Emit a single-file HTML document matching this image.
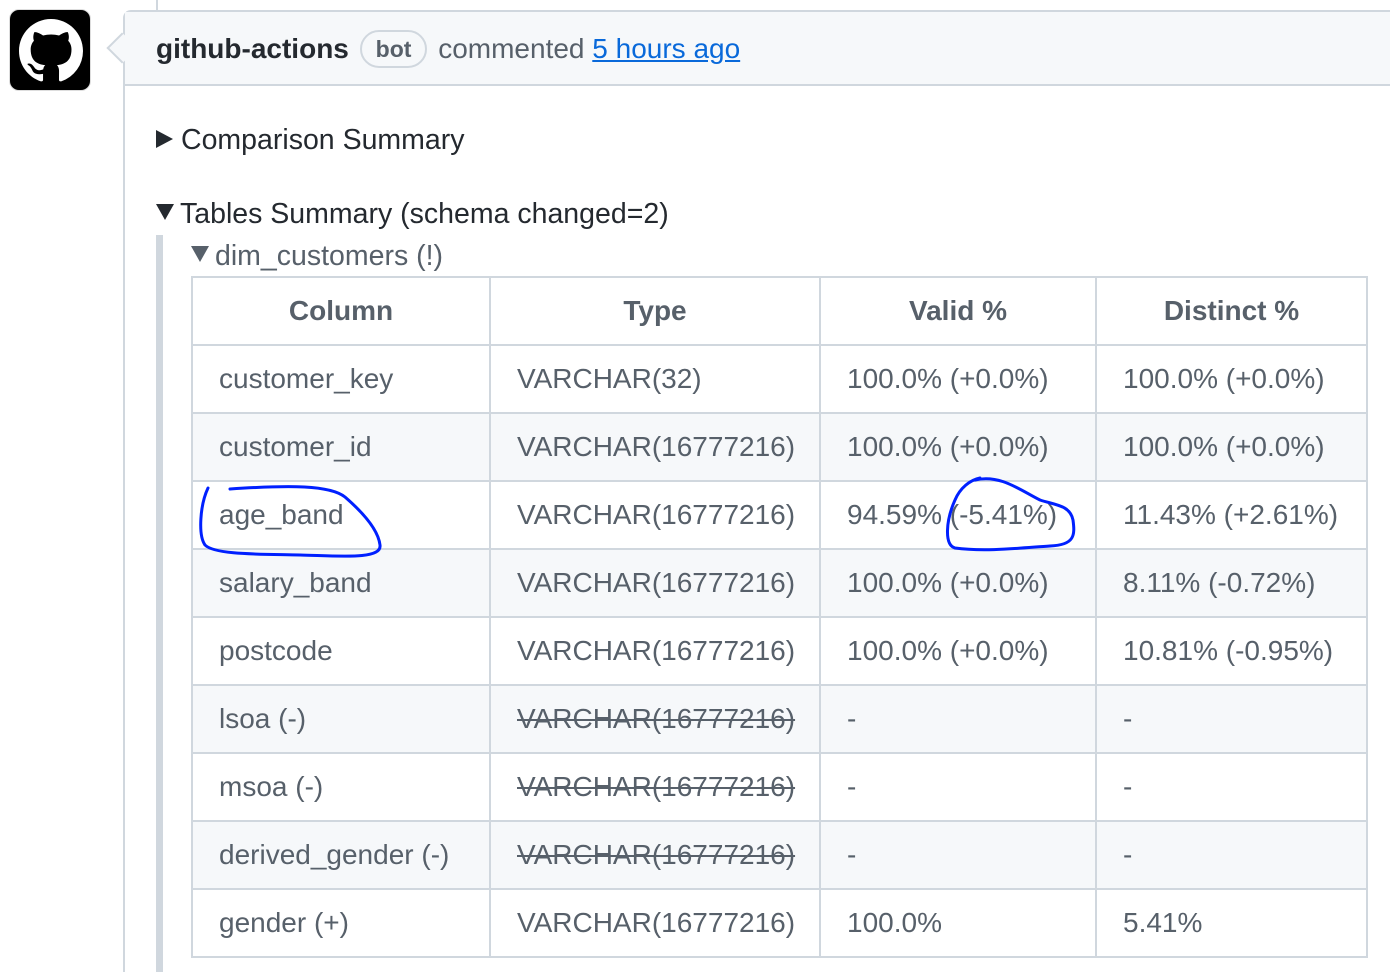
<!DOCTYPE html>
<html style="overflow:hidden;height:972px"><head><meta charset="utf-8"><style>
body{margin:0;width:1390px;height:972px;background:#fff;font-family:"Liberation Sans",Arial,sans-serif;position:relative;overflow:hidden;color:#24292f}
.abs{position:absolute}
table{position:absolute;left:191px;top:276px;border-collapse:collapse;font-size:28px;color:#57606a}
td,th{border:2px solid #d0d7de;height:66px;padding:0 0 0 26px;text-align:left;white-space:nowrap}
th{text-align:center;padding:0;font-weight:bold;color:#57606a}
tr.g td{background:#f6f8fa}
s{text-decoration-thickness:2px}
.tr{display:inline-block;width:0;height:0;border-top:9px solid transparent;border-bottom:9px solid transparent;border-left:17px solid #24292f;margin-right:8px;vertical-align:1px}
.td{display:inline-block;width:0;height:0;border-left:9.5px solid transparent;border-right:9.5px solid transparent;border-top:16px solid #24292f;margin-right:6px;vertical-align:3px}
</style></head><body>
<div class="abs" style="left:156px;top:0;width:2px;height:11px;background:#d0d7de"></div>
<div class="abs" style="left:9px;top:9px;width:82px;height:82px;border-radius:10px;background:#000;border:1px solid #ddd;box-sizing:border-box">
<svg width="80" height="80" viewBox="0 0 16 16" style="position:absolute;left:1px;top:1px"><path fill="#fff" transform="translate(1.6 1.6) scale(0.8)" d="M8 0C3.58 0 0 3.58 0 8c0 3.54 2.29 6.530 5.47 7.590.4.07.55-.17.55-.38 0-.19-.01-.82-.01-1.49-2.01.37-2.53-.49-2.690-.94-.09-.23-.48-.94-.82-1.130-.28-.15-.68-.52-.01-.53.63-.01 1.080.58 1.230.82.72 1.21 1.870.87 2.330.66.07-.52.28-.87.51-1.07-1.78-.2-3.64-.89-3.64-3.95 0-.87.31-1.59.82-2.15-.08-.2-.36-1.020.08-2.12 0 0 .67-.21 2.2.82.64-.18 1.32-.27 2-.27.68 0 1.36.09 2 .27 1.53-1.04 2.2-.82 2.2-.82.44 1.1.16 1.92.08 2.12.51.56.82 1.27.82 2.15 0 3.07-1.87 3.75-3.65 3.95.29.25.54.73.54 1.48 0 1.07-.01 1.93-.01 2.2 0 .21.15.46.55.38A8.013 8.013 0 0016 8c0-4.42-3.58-8-8-8z"/></svg></div>
<div class="abs" style="left:123px;top:10px;width:1300px;height:962px;border:2px solid #d0d7de;border-bottom:none;border-radius:8px 8px 0 0;box-sizing:border-box"></div>
<div class="abs" style="left:125px;top:12px;width:1265px;height:72px;background:#f6f8fa;border-bottom:2px solid #d0d7de"></div>
<div class="abs" style="left:111px;top:37px;width:20px;height:20px;background:#f6f8fa;border-left:2px solid #d0d7de;border-bottom:2px solid #d0d7de;transform:rotate(45deg)"></div>
<div class="abs" style="left:156px;top:30px;font-size:28px;line-height:36px;color:#57606a;white-space:nowrap"><b style="color:#24292f">github-actions</b> <span style="display:inline-block;border:2px solid #d0d7de;border-radius:20px;padding:0 14px;font-size:23px;line-height:34px;vertical-align:1px;margin:0 3px;font-weight:bold;color:#57606a">bot</span> commented <span style="color:#0969da;text-decoration:underline">5 hours ago</span></div>
<div class="abs" style="left:156px;top:122px;font-size:28.5px;line-height:36px;white-space:nowrap"><span class="tr"></span>Comparison Summary</div>
<div class="abs" style="left:156px;top:196px;font-size:28.5px;line-height:36px;white-space:nowrap"><span class="td"></span>Tables Summary (schema changed=2)</div>
<div class="abs" style="left:156px;top:235px;width:7px;height:737px;background:#d0d7de"></div>
<div class="abs" style="left:191px;top:238px;font-size:28.5px;line-height:36px;color:#57606a;white-space:nowrap"><span class="td" style="border-top-color:#57606a"></span>dim_customers (!)</div>
<table>
<tr><th style="width:296px">Column</th><th style="width:328px">Type</th><th style="width:274px">Valid %</th><th style="width:269px">Distinct %</th></tr>
<tr><td>customer_key</td><td>VARCHAR(32)</td><td>100.0% (+0.0%)</td><td>100.0% (+0.0%)</td></tr>
<tr class="g"><td>customer_id</td><td>VARCHAR(16777216)</td><td>100.0% (+0.0%)</td><td>100.0% (+0.0%)</td></tr>
<tr><td>age_band</td><td>VARCHAR(16777216)</td><td>94.59% (-5.41%)</td><td>11.43% (+2.61%)</td></tr>
<tr class="g"><td>salary_band</td><td>VARCHAR(16777216)</td><td>100.0% (+0.0%)</td><td>8.11% (-0.72%)</td></tr>
<tr><td>postcode</td><td>VARCHAR(16777216)</td><td>100.0% (+0.0%)</td><td>10.81% (-0.95%)</td></tr>
<tr class="g"><td>lsoa (-)</td><td><s>VARCHAR(16777216)</s></td><td>-</td><td>-</td></tr>
<tr><td>msoa (-)</td><td><s>VARCHAR(16777216)</s></td><td>-</td><td>-</td></tr>
<tr class="g"><td>derived_gender (-)</td><td><s>VARCHAR(16777216)</s></td><td>-</td><td>-</td></tr>
<tr><td>gender (+)</td><td>VARCHAR(16777216)</td><td>100.0%</td><td>5.41%</td></tr>
</table>
<svg class="abs" style="left:0;top:0" width="1390" height="972" fill="none" stroke="#0020ff" stroke-width="3" stroke-linecap="round">
<path d="M230 489 C290 485 330 485 345 497 C360 510 378 528 380 545 C382 560 340 556 300 555 C260 554 215 555 205 545 C198 535 200 505 208 488"/>
<path d="M975 480 C1000 474 1020 490 1040 500 C1055 505 1070 505 1073 520 C1075 535 1075 545 1050 546 C1020 548 985 552 955 548 C944 545 946 520 955 500 C960 488 970 480 980 478"/>
</svg>
</body></html>
